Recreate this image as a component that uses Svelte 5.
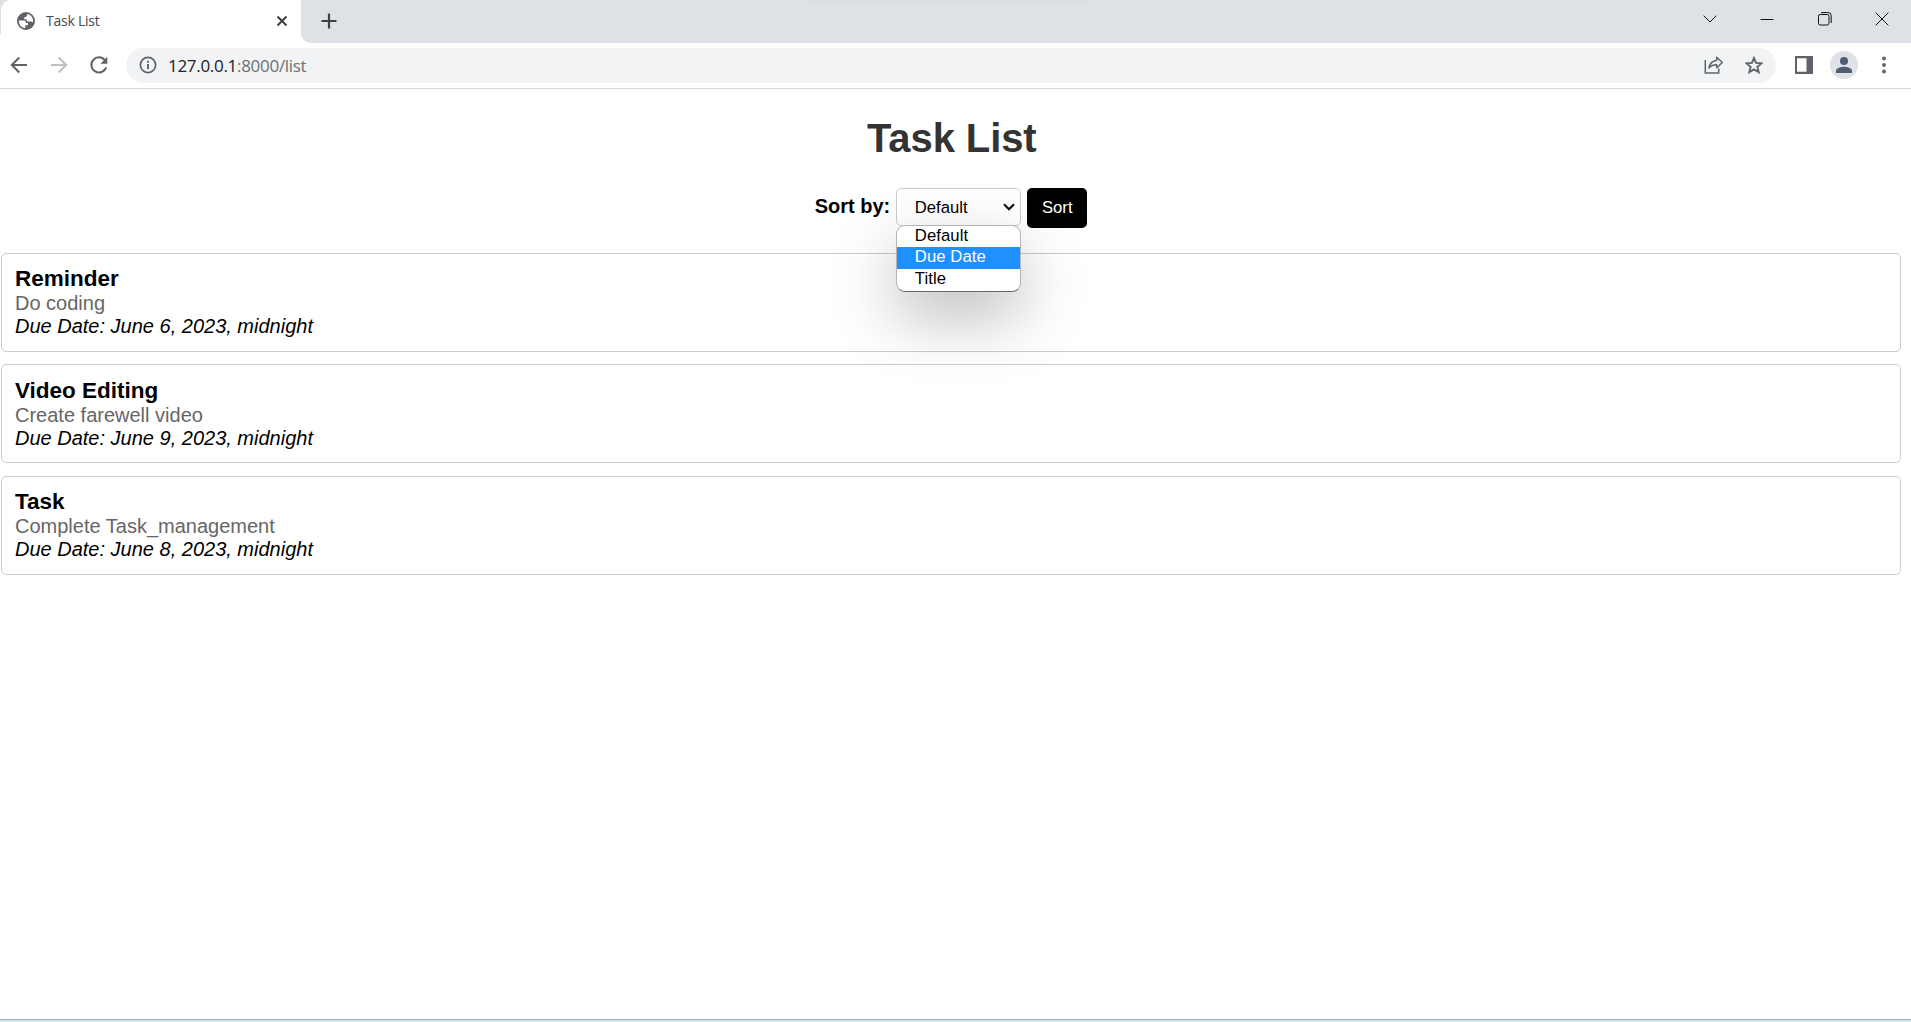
<script>
  const tasks = [
    { title: 'Reminder', text: 'Do coding', due: 'June 6, 2023, midnight' },
    { title: 'Video Editing', text: 'Create farewell video', due: 'June 9, 2023, midnight' },
    { title: 'Task', text: 'Complete Task_management', due: 'June 8, 2023, midnight' }
  ];
  const options = ['Default', 'Due Date', 'Title'];
  let active = $state('Due Date');
</script>

<div class="window">
  <header class="tabs">
    <div class="tab">
      <svg class="globe" width="18" height="18" viewBox="0 0 18 18"><circle cx="9" cy="9" r="9" fill="#5f6368" /><path d="M1.900 8.600h4.600c1.600 0 2.400.8 2.400 2.300h2v2.300H8.300v2.900C4.600 16 1.800 13 1.900 8.600zM10.200 1.900c3.500.5 6 3.500 6 7.100 0 .6-.1 1.100-.2 1.600-.7-.7-1.300-1-2.300-1h-1.900c-1.500 0-2.200-.9-2.200-2.200H7.300V5.200c1.900 0 2.900-.9 2.900-3.300z" fill="#fff" /></svg>
      <span class="tab-name">Task List</span>
      <svg class="tab-close" width="12" height="12" viewBox="0 0 12 12"><path d="M1.500 1.500l9 9M10.500 1.500l-9 9" stroke="#3c4043" stroke-width="2" /></svg>
    </div>
    <div class="strip">
      <svg class="plus" width="16" height="16" viewBox="0 0 16 16"><path d="M8 .5v15M.5 8h15" stroke="#3c4043" stroke-width="2.200" /></svg>
      <div class="controls">
        <svg width="14" height="14" viewBox="0 0 14 14"><path d="M.7 3.700L7 10l6.300-6.300" /></svg>
        <svg width="14" height="14" viewBox="0 0 14 14"><path d="M.5 7.500h13" /></svg>
        <svg width="14" height="14" viewBox="0 0 14 14"><rect x=".5" y="2.500" width="10.500" height="10.500" rx="1.800" /><path d="M3 .6h7.200q3 0 3 3v7.400" /></svg>
        <svg width="14" height="14" viewBox="0 0 14 14"><path d="M.6 .6l12.800 12.800M13.400 .6L.6 13.400" /></svg>
      </div>
    </div>
  </header>

  <nav class="toolbar">
    <svg class="back" width="18" height="18" viewBox="0 0 18 18"><path d="M17 9H2M9.300 1.500L1.800 9l7.500 7.500" fill="none" stroke="#5f6368" stroke-width="2" /></svg>
    <svg class="forward" width="18" height="18" viewBox="0 0 18 18"><path d="M1 9h15M8.700 1.500L16.200 9l-7.500 7.500" fill="none" stroke="#bdbfc1" stroke-width="2" /></svg>
    <svg class="reload" width="20" height="20" viewBox="0 0 20 20"><path d="M16 5.200A7.600 7.600 0 1 0 17.200 12.400" fill="none" stroke="#5f6368" stroke-width="2" /><path d="M18.300 1.800v7h-7z" fill="#5f6368" /></svg>
    <div class="address">
      <svg width="18" height="18" viewBox="0 0 18 18"><circle cx="9" cy="9" r="7.600" fill="none" stroke="#5f6368" stroke-width="1.700" /><path d="M9 8v5M9 4.800v1.900" stroke="#5f6368" stroke-width="1.900" /></svg>
      <span class="url">127.0.0.1<span>:8000/list</span></span>
      <svg class="share" width="20" height="20" viewBox="0 0 20 20"><path d="M1.300 5v13h13.400v-4.500" fill="none" stroke="#5f6368" stroke-width="1.500" /><path d="M12.700 2.300l5.600 5.200-5.600 5.200V9.800c-3.500 0-5.800.9-7.700 3.100.6-3.900 3-7 7.700-7.700z" fill="none" stroke="#5f6368" stroke-width="1.500" stroke-linejoin="round" /></svg>
      <svg width="18" height="18" viewBox="0 0 18 18"><path d="M9 2l2.100 4.900 5.400.5-4.100 3.500 1.300 5.300L9 13.400l-4.700 2.800 1.300-5.300-4.100-3.500 5.400-.5z" fill="none" stroke="#5f6368" stroke-width="1.900" /></svg>
    </div>
    <svg class="panel" width="18" height="18" viewBox="0 0 18 18"><path d="M0 0h18v18H0zM2 2.300v13.400h9.500V2.300z" fill="#5f6368" fill-rule="evenodd" /></svg>
    <svg class="profile" width="28" height="28" viewBox="0 0 28 28"><circle cx="14" cy="14" r="14" fill="#dee1e6" /><circle cx="14" cy="10" r="4" fill="#4f5d75" /><path d="M6 22v-2.200c0-2.700 5.300-4 8-4s8 1.300 8 4V22z" fill="#4f5d75" /></svg>
    <svg class="dots" width="4" height="18" viewBox="0 0 4 18"><circle cx="2" cy="2.500" r="1.900" /><circle cx="2" cy="9" r="1.900" /><circle cx="2" cy="15.500" r="1.900" /></svg>
  </nav>

  <main>
    <h1>Task List</h1>
    <div class="sort">
      <span class="label">Sort by:</span>
      <div class="select">
        <span>Default</span>
        <svg width="12" height="8" viewBox="0 0 12 8"><path d="M1 1.200l5 5 5-5" fill="none" stroke="#111" stroke-width="2.200" /></svg>
        <div class="menu">
          {#each options as option}
            <div class="option" class:active={option === active} role="option" aria-selected={option === active} tabindex="-1" onmouseenter={() => (active = option)}>{option}</div>
          {/each}
        </div>
      </div>
      <button>Sort</button>
    </div>
    <div class="list">
      {#each tasks as task}
        <article>
          <h2>{task.title}</h2>
          <p>{task.text}</p>
          <em>Due Date: {task.due}</em>
        </article>
      {/each}
    </div>
  </main>
  <footer></footer>
</div>

<style>
  :global(body) { margin: 0; background: #fff; overflow: hidden; }
  .window { height: 1022px; display: flex; flex-direction: column; font-family: 'Liberation Sans', Arial, sans-serif; color: #000; }
  svg { display: block; flex: none; }
  .tabs { height: 43px; display: flex; background: linear-gradient(#dee1e6, #dee1e6) 0 0 / 12px 34px no-repeat #fff; }
  .tab { width: 301px; box-sizing: border-box; display: flex; align-items: center; margin-left: 1px; padding: 0 14px 1px 16px; background: #fff; border-radius: 10px 10px 0 0; }
  .tab-name { margin: 0 0 2px 11px; font: 14px 'Open Sans', sans-serif; letter-spacing: -0.240px; color: #45494d; flex: 1; white-space: nowrap; }
  .strip { flex: 1; display: flex; align-items: center; margin-left: -1px; background: linear-gradient(#dadce1, #dee1e6) 508px 0 / 278px 4px no-repeat #dee1e6; border-radius: 0 0 0 10px; padding: 0 22px 0 19.500px; }
  .plus { margin-bottom: 1px; }
  .controls { margin-left: auto; display: flex; gap: 43.300px; padding-bottom: 6px; }
  .controls path, .controls rect { fill: none; stroke: #111; stroke-width: 1; }
  .toolbar { height: 46px; box-sizing: border-box; display: flex; align-items: center; padding: 0 25.500px 1px 9.500px; border-bottom: 1px solid #d5d7da; }
  .back { margin-right: 22px; }
  .forward { margin-right: 21px; }
  .reload { margin-right: 17px; }
  .address { flex: 1; height: 35px; box-sizing: border-box; display: flex; align-items: center; padding: 0 13px 0 13.500px; border-radius: 18px; background: #f1f3f4; }
  .url { margin-left: 11px; font: 17px 'Open Sans', sans-serif; letter-spacing: -0.300px; color: #202124; }
  .url span { color: #6c7074; }
  .share { margin-left: auto; margin-right: 21px; }
  .panel { margin-left: 19px; margin-right: 17.500px; }
  .profile { margin-right: 23.500px; }
  .dots { fill: #5f6368; }
  main { flex: 1; }
  h1 { margin: 26px 7.500px 0 0; font-size: 40px; line-height: 46px; text-align: center; color: #333; letter-spacing: -.1px; }
  .sort { display: flex; justify-content: center; align-items: flex-start; margin: 27px 9px 0 0; height: 65px; }
  .label { font-size: 20px; line-height: 23px; font-weight: bold; margin: 7px 6px 0 0; }
  .select { position: relative; width: 125px; height: 38px; box-sizing: border-box; border: 1px solid #ccc; border-radius: 5px; display: flex; align-items: center; justify-content: space-between; padding: 0 5px 0 17.500px; font-size: 16.670px; margin-right: 6px; }
  .select > span { padding-top: 2px; }
  .menu { position: absolute; z-index: 2; left: -1px; top: 36px; width: 125px; height: 67px; box-sizing: border-box; overflow: hidden; border: 1px solid #b5b5b5; border-bottom-color: #666; border-radius: 9px; background: #fff; box-shadow: 0 25px 65px rgba(0, 0, 0, .27); }
  .option { height: 22px; line-height: 19px; padding-left: 17.500px; letter-spacing: .1px; }
  .option.active { background: #1e90ff; color: #fff; }
  .option:first-child { height: 21px; line-height: 19px; }
  button { width: 60px; height: 40px; padding: 0; border: 0; border-radius: 5px; background: #000; color: #fff; font: 16.670px 'Liberation Sans', Arial, sans-serif; }
  .list { display: flex; flex-direction: column; gap: 12.400px; padding: 0 10px 0 1px; }
  article { height: 99px; box-sizing: border-box; border: 1px solid #ccc; border-radius: 5px; padding: 12px 13px; }
  article:nth-child(2) { padding-top: 12.700px; }
  h2 { margin: 0; font-size: 22.500px; line-height: 26px; }
  p { margin: 0; font-size: 20px; line-height: 23px; color: #666; }
  em { display: block; font-size: 20px; line-height: 23px; }
  footer { height: 2px; border-top: 1px solid #9fb0b3; background: #cbe7ee; }
</style>
